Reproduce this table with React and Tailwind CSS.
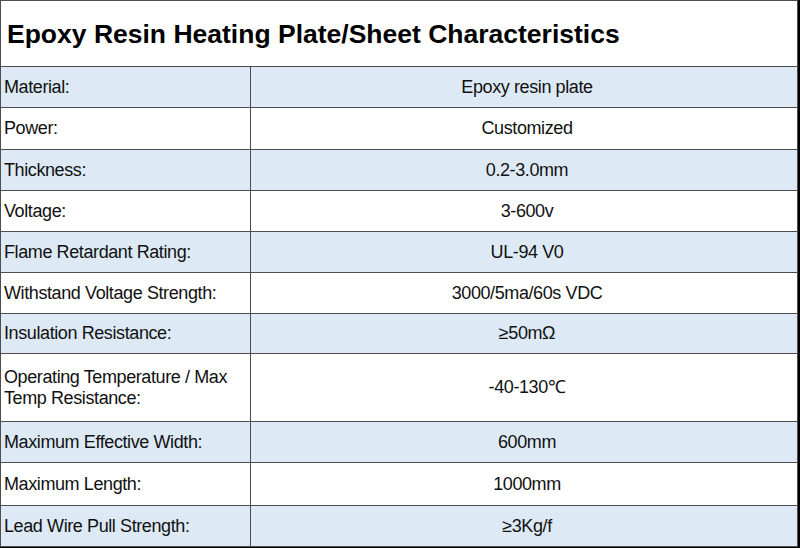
const rows = [
  { label: 'Material:', value: 'Epoxy resin plate', h: 'h-[41px]', blue: true },
  { label: 'Power:', value: 'Customized', h: 'h-[42px]' },
  { label: 'Thickness:', value: '0.2-3.0mm', h: 'h-[41px]', blue: true },
  { label: 'Voltage:', value: '3-600v', h: 'h-[41px]' },
  { label: 'Flame Retardant Rating:', value: 'UL-94 V0', h: 'h-[41px]', blue: true },
  { label: 'Withstand Voltage Strength:', value: '3000/5ma/60s VDC', h: 'h-[41px]' },
  { label: 'Insulation Resistance:', value: '≥50mΩ', h: 'h-[40px]', blue: true },
  { label: 'Operating Temperature / Max Temp Resistance:', value: '-40-130℃', h: 'h-[68px]' },
  { label: 'Maximum Effective Width:', value: '600mm', h: 'h-[41px]', blue: true },
  { label: 'Maximum Length:', value: '1000mm', h: 'h-[43px]' },
  { label: 'Lead Wire Pull Strength:', value: '≥3Kg/f', h: 'h-[40px]', blue: true },
];

export default function App() {
  return (
    <div className="w-[800px] h-[548px] bg-white font-['Liberation_Sans',Arial,sans-serif] text-[#111]">
      <div className="w-[800px] h-[548px] border-r-2 border-b-2 border-black">
        <div className="w-[798px] border border-[#4d4d4d]">
          <div className="h-[66px] flex items-center pl-[6px] border-b border-[#4d4d4d]">
            <h1 className="text-[26.5px] font-bold text-black pt-[2px]">
              Epoxy Resin Heating Plate/Sheet Characteristics
            </h1>
          </div>
          {rows.map((r, i) => (
            <div
              key={i}
              className={`flex ${r.h} border-b border-[#4d4d4d] last:border-b-0 ${r.blue ? 'bg-[#ddeaf6]' : 'bg-white'}`}
            >
              <div className="w-[250px] shrink-0 border-r border-[#4d4d4d] flex items-center pl-[3px] pr-2 text-[18px] leading-[21px] tracking-[-0.4px]">
                <span>{r.label}</span>
              </div>
              <div className="flex-1 flex items-center justify-center text-[18px] tracking-[-0.4px] pl-[6px]">
                {r.value}
              </div>
            </div>
          ))}
        </div>
      </div>
    </div>
  );
}
